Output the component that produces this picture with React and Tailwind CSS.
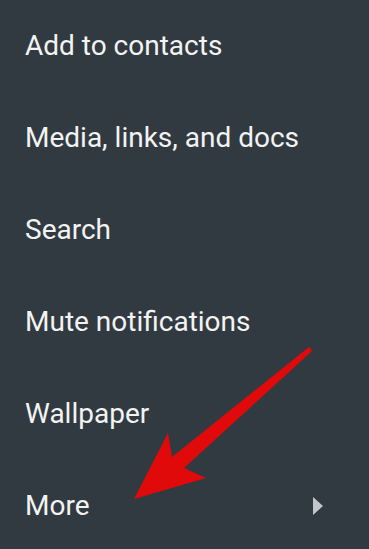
export default function App() {
  const items = ['Add to contacts', 'Media, links, and docs', 'Search', 'Mute notifications', 'Wallpaper', 'More'];

  return (
    <div className="relative w-[369px] h-[549px] overflow-hidden bg-[#323a41]" style={{ fontFamily: 'Roboto, "Noto Sans", sans-serif' }}>
      {items.map((label, i) => (
        <div key={label} className="h-[92px] flex items-center justify-between pl-[25px] pr-[46px]">
          <span className="text-[28px] leading-none text-[#f2f3f3]">{label}</span>
          {i === items.length - 1 && (
            <svg width="10" height="18" viewBox="0 0 10 18">
              <path d="M0 0 L10 9 L0 18 Z" fill="#c3c7cb" />
            </svg>
          )}
        </div>
      ))}

      {/* red annotation arrow */}
      <svg className="absolute left-0 top-0 pointer-events-none" width="369" height="549" viewBox="0 0 369 549">
        <path
          d="M311 349 L312 351 L184 468 L206 478 L134 499 L168 433 L172 457 L309 347 Z"
          fill="#e00a0a"
        />
      </svg>
    </div>
  );
}
